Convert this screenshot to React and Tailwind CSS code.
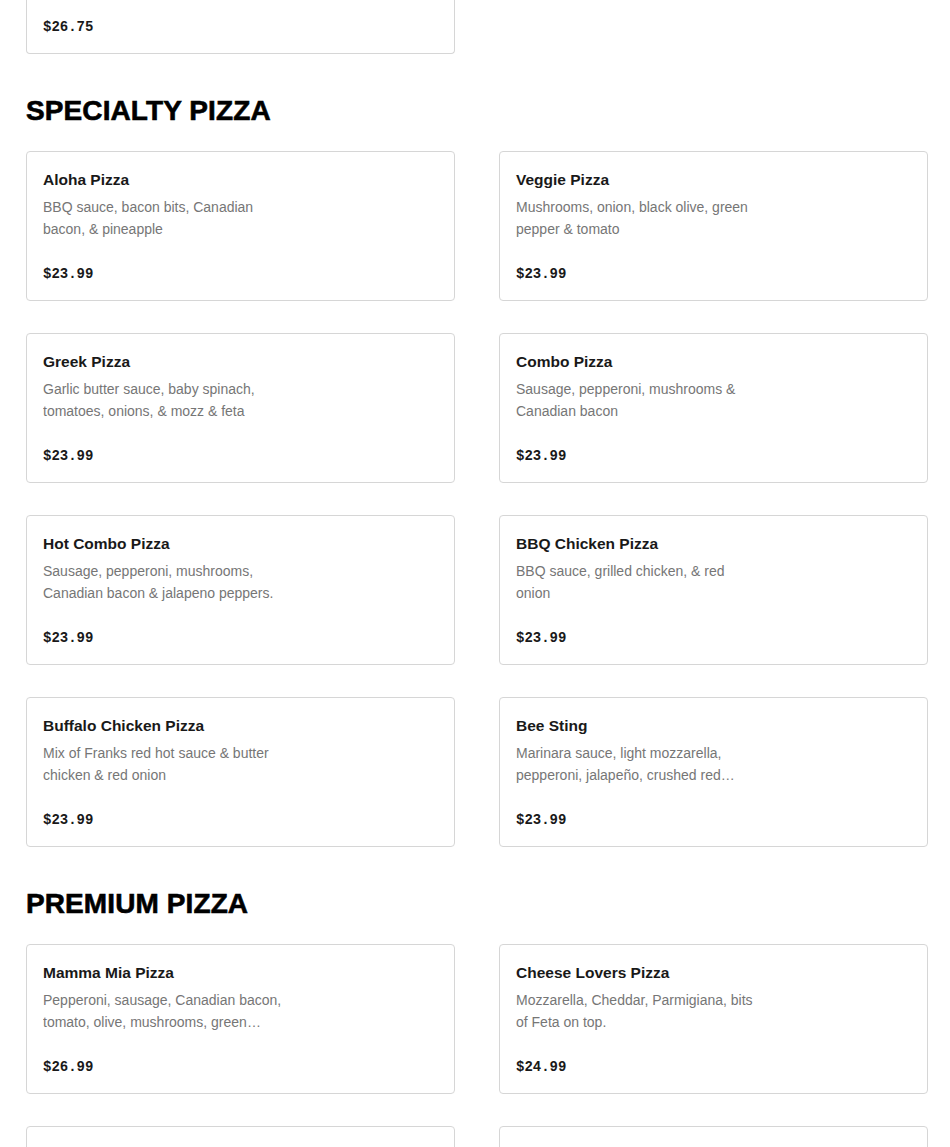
const sections = [
  {
    title: null,
    items: [{ price: '$26.75', partial: true }],
  },
  {
    title: 'SPECIALTY PIZZA',
    items: [
      { name: 'Aloha Pizza', desc: 'BBQ sauce, bacon bits, Canadian bacon, & pineapple', price: '$23.99' },
      { name: 'Veggie Pizza', desc: 'Mushrooms, onion, black olive, green pepper & tomato', price: '$23.99' },
      { name: 'Greek Pizza', desc: 'Garlic butter sauce, baby spinach, tomatoes, onions, & mozz & feta', price: '$23.99' },
      { name: 'Combo Pizza', desc: 'Sausage, pepperoni, mushrooms & Canadian bacon', price: '$23.99' },
      { name: 'Hot Combo Pizza', desc: 'Sausage, pepperoni, mushrooms, Canadian bacon & jalapeno peppers.', price: '$23.99' },
      { name: 'BBQ Chicken Pizza', desc: 'BBQ sauce, grilled chicken, & red onion', price: '$23.99' },
      { name: 'Buffalo Chicken Pizza', desc: 'Mix of Franks red hot sauce & butter chicken & red onion', price: '$23.99' },
      { name: 'Bee Sting', desc: 'Marinara sauce, light mozzarella, pepperoni, jalapeño, crushed red pepper flakes & hot honey drizzle', price: '$23.99' },
    ],
  },
  {
    title: 'PREMIUM PIZZA',
    items: [
      { name: 'Mamma Mia Pizza', desc: 'Pepperoni, sausage, Canadian bacon, tomato, olive, mushrooms, green pepper, onion & garlic', price: '$26.99' },
      { name: 'Cheese Lovers Pizza', desc: 'Mozzarella, Cheddar, Parmigiana, bits of Feta on top.', price: '$24.99' },
      { name: 'Meat Lovers Pizza', desc: 'Pepperoni, sausage, salami, Canadian bacon & bacon bits', price: '$26.99' },
      { name: 'Chicken Pesto Pizza', desc: 'Pesto sauce, grilled chicken, tomato & onion', price: '$26.99' },
    ],
  },
];

// the first card is the tail of the previous section, cut by the scroll
const ItemCard = ({ item }) => (
  <div
    className={
      item.partial
        ? 'flex flex-col rounded-b-[4px] border border-t-0 border-[#d6d6d6] bg-white px-4 pt-[17px] pb-4'
        : 'flex flex-col rounded-[4px] border border-[#d6d6d6] bg-white px-4 pt-4 pb-4'
    }
  >
    {!item.partial && (
      <>
        <p className="text-[15.5px] leading-6 font-semibold text-[#191919]">{item.name}</p>
        <p className="mt-1 max-w-[245px] text-[14px] leading-[22px] text-[#767676] line-clamp-2">{item.desc}</p>
      </>
    )}
    <p
      className={`${item.partial ? '' : 'mt-6'} font-['Liberation_Mono',monospace] text-[14px] leading-5 font-bold text-[#191919]`}
    >
      {item.price}
    </p>
  </div>
);

const App = () => {
  return (
    <div className="min-h-screen bg-white font-['Liberation_Sans',Arial,sans-serif] pl-[26px] pr-[22px]">
      {sections.map((section, i) => (
        <section key={i}>
          {section.title && (
            <h2 className="mt-[39px] mb-[22px] text-[28px] leading-9 font-black tracking-[0.1px] text-black [-webkit-text-stroke:0.6px_black]">
              {section.title}
            </h2>
          )}
          <div className="grid grid-cols-2 gap-x-[44px] gap-y-8">
            {section.items.map((item, j) => (
              <ItemCard key={j} item={item} />
            ))}
          </div>
        </section>
      ))}
    </div>
  );
};

export default App;
